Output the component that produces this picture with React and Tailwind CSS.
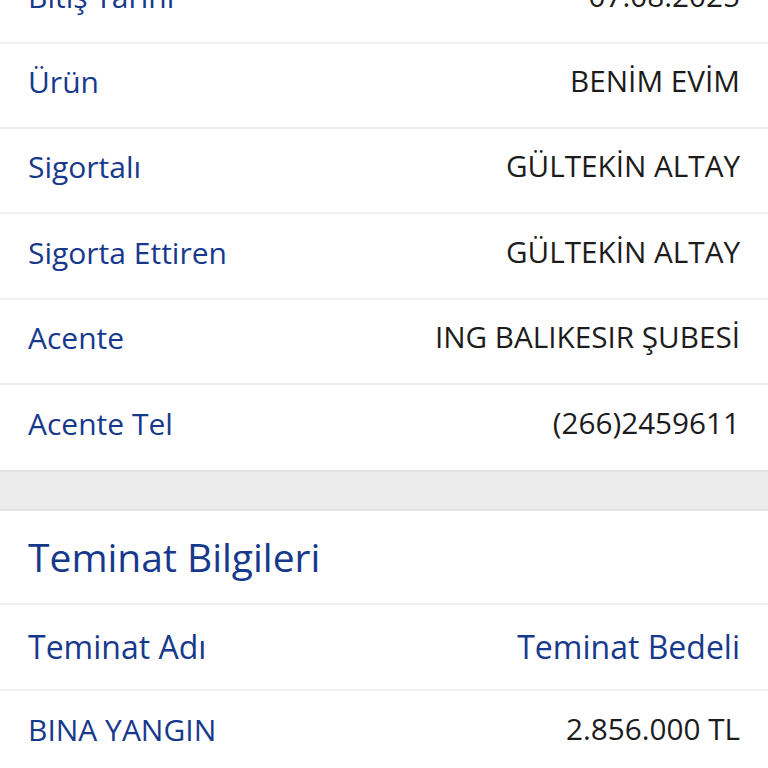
import React from "react";

const policyRows = [
  { label: "Bitiş Tarihi", value: "07.08.2025" },
  { label: "Ürün", value: "BENİM EVİM" },
  { label: "Sigortalı", value: "GÜLTEKİN ALTAY" },
  { label: "Sigorta Ettiren", value: "GÜLTEKİN ALTAY" },
  { label: "Acente", value: "ING BALIKESIR ŞUBESİ" },
  { label: "Acente Tel", value: "(266)2459611" },
];

const coverageRows = [{ label: "BINA YANGIN", value: "2.856.000 TL" }];

const Row = ({ label, value, last }) => (
  <div
    className={`h-[85.3px] px-7 pb-2 flex items-center justify-between ${
      last ? "" : "border-b-2 border-[#efefef]"
    }`}
  >
    <span className="text-[30px] text-[#17398c]">{label}</span>
    <span className="text-[29.7px] text-[#1c1c1c]">{value}</span>
  </div>
);

export default function App() {
  return (
    <div
      className="w-[768px] h-[768px] overflow-hidden bg-white"
      style={{ fontFamily: '"Open Sans", "Noto Sans", sans-serif' }}
    >
      <div className="-mt-[41.5px]">
        {policyRows.map((r, i) => (
          <Row key={r.label} {...r} last={i === policyRows.length - 1} />
        ))}
        <div className="h-[41px] bg-[#ececec] border-t-2 border-b-2 border-[#e3e3e3]" />
        <div className="h-[94px] px-7 flex items-center border-b-2 border-[#efefef]">
          <h2 className="text-[39px] text-[#17398c]">Teminat Bilgileri</h2>
        </div>
        <div className="h-[85.3px] px-7 flex items-center justify-between border-b-2 border-[#efefef]">
          <span className="text-[32px] text-[#17398c]">Teminat Adı</span>
          <span className="text-[32px] text-[#17398c]">Teminat Bedeli</span>
        </div>
        {coverageRows.map((r) => (
          <Row key={r.label} {...r} last />
        ))}
      </div>
    </div>
  );
}
